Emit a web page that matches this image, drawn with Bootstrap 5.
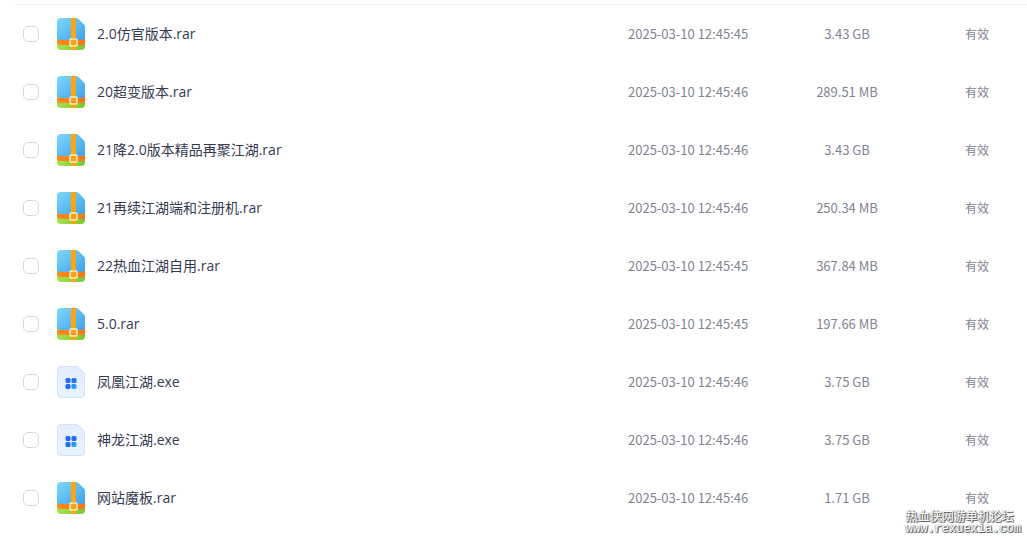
<!DOCTYPE html>
<html lang="zh-CN">
<head>
<meta charset="utf-8">
<meta name="viewport" content="width=device-width, initial-scale=1">
<title>文件列表</title>
<link href="https://cdn.jsdelivr.net/npm/bootstrap@5.3.0/dist/css/bootstrap.min.css" rel="stylesheet">
<style>
body{font-family:"Noto Sans CJK SC",sans-serif}
.file-list{margin-left:15px}
.files{table-layout:fixed;border-top:1px solid #f1f2f4}
.files td{height:58px;padding:0;vertical-align:middle;border:0;font-size:13px;line-height:20px;color:#7f8491}
.files .name-cell{font-family:"Open Sans","Noto Sans CJK SC",sans-serif;font-size:14px}
.files label{color:#333a50}
.col-tick{width:42px}
.col-date{width:154px}
.col-size{width:130px}
.col-state{width:115px}
.files .form-check-input{width:16px;height:16px;margin:0 0 0 8px;border:1px solid #d4d7de;border-radius:5px;display:block}
.files .size-cell{padding-top:1px}
.files .state-cell{font-size:12px;padding:1px 0 0 53px}
.file-icon{width:28px;height:32px;flex:none}
.forum-mark{right:6px;bottom:8px;font-size:12px;line-height:14px;color:#fff;text-shadow:1px 1px 0 #666,1px 0 1px #777,0 1px 1px #777,-1px 0 1px #ccc}
.forum-url{font-family:"Liberation Mono",monospace;line-height:12px}
</style>
</head>
<body class="bg-white">
<svg class="position-absolute" width="0" height="0" aria-hidden="true">
  <defs>
    <linearGradient id="sky" x1="0" y1="0" x2="1" y2="1"><stop stop-color="#7dd8ff"/><stop offset="1" stop-color="#3ba2ee"/></linearGradient>
    <linearGradient id="grass" x1="0" y1="0" x2="1" y2="0"><stop stop-color="#a7e34f"/><stop offset="1" stop-color="#76c92c"/></linearGradient>
    <linearGradient id="band" x1="0" y1="0" x2="1" y2="0"><stop stop-color="#ff8a1b"/><stop offset="1" stop-color="#ff7414"/></linearGradient>
    <linearGradient id="sheet" x1="0" y1="0" x2="0" y2="1"><stop stop-color="#e3ecff"/><stop offset="1" stop-color="#e6f4ff"/></linearGradient>
    <linearGradient id="aqua" x1="0" y1="0" x2="1" y2="1"><stop stop-color="#2379ff"/><stop offset="1" stop-color="#35b6ff"/></linearGradient>
  </defs>
  <symbol id="rar" viewBox="0 0 28 32">
    <path d="M0 20h28v8a4 4 0 0 1-4 4H4a4 4 0 0 1-4-4z" fill="url(#grass)"/>
    <path d="M0 18h28v6a3 3 0 0 1-3 3H3a3 3 0 0 1-3-3z" fill="url(#band)"/>
    <path d="M4 0h15q1.500 0 2.500 1l5.500 5.500q1 1 1 2.500v10a3 3 0 0 1-3 3H3a3 3 0 0 1-3-3V4a4 4 0 0 1 4-4z" fill="url(#sky)"/>
    <path d="M14 0h5v32h-5z" fill="#ffa509"/>
    <rect x="13" y="21" width="7" height="7" rx="1" fill="#ffa01b" stroke="#fff0c5" stroke-width="1.5"/>
  </symbol>
  <symbol id="exe" viewBox="0 0 28 32">
    <path d="M4 .5h15.500q1 0 2 1l5 5q1 1 1 2V28a3.500 3.500 0 0 1-3.500 3.500H4A3.500 3.500 0 0 1 .5 28V4A3.500 3.500 0 0 1 4 .5z" fill="url(#sheet)" stroke="#d0e0fd"/>
    <path d="M21.500 1.500 26.500 6.500 27 8z" fill="#c9dafd"/>
    <g fill="#216cff"><rect x="8.500" y="12" width="5" height="5" rx="1.500"/><rect x="14.500" y="12" width="5" height="5" rx="1.500"/><rect x="8.500" y="18" width="5" height="5" rx="1.500"/></g>
    <rect x="14.500" y="18" width="5" height="5" rx="1.500" fill="url(#aqua)"/>
  </symbol>
</svg>
<main class="file-list position-relative pt-1 pb-3">
  <table class="files table table-borderless w-100 mb-0">
    <colgroup><col class="col-tick"><col><col class="col-date"><col class="col-size"><col class="col-state"></colgroup>
    <tbody>
      <tr><td><input class="form-check-input" type="checkbox" id="f1"></td><td class="name-cell"><div class="d-flex align-items-center"><svg class="file-icon me-2"><use href="#rar"/></svg><label class="ms-1" for="f1">2.0仿官版本.rar</label></div></td><td>2025-03-10 12:45:45</td><td class="size-cell text-center">3.43 GB</td><td class="state-cell">有效</td></tr>
      <tr><td><input class="form-check-input" type="checkbox" id="f2"></td><td class="name-cell"><div class="d-flex align-items-center"><svg class="file-icon me-2"><use href="#rar"/></svg><label class="ms-1" for="f2">20超变版本.rar</label></div></td><td>2025-03-10 12:45:46</td><td class="size-cell text-center">289.51 MB</td><td class="state-cell">有效</td></tr>
      <tr><td><input class="form-check-input" type="checkbox" id="f3"></td><td class="name-cell"><div class="d-flex align-items-center"><svg class="file-icon me-2"><use href="#rar"/></svg><label class="ms-1" for="f3">21降2.0版本精品再聚江湖.rar</label></div></td><td>2025-03-10 12:45:46</td><td class="size-cell text-center">3.43 GB</td><td class="state-cell">有效</td></tr>
      <tr><td><input class="form-check-input" type="checkbox" id="f4"></td><td class="name-cell"><div class="d-flex align-items-center"><svg class="file-icon me-2"><use href="#rar"/></svg><label class="ms-1" for="f4">21再续江湖端和注册机.rar</label></div></td><td>2025-03-10 12:45:46</td><td class="size-cell text-center">250.34 MB</td><td class="state-cell">有效</td></tr>
      <tr><td><input class="form-check-input" type="checkbox" id="f5"></td><td class="name-cell"><div class="d-flex align-items-center"><svg class="file-icon me-2"><use href="#rar"/></svg><label class="ms-1" for="f5">22热血江湖自用.rar</label></div></td><td>2025-03-10 12:45:45</td><td class="size-cell text-center">367.84 MB</td><td class="state-cell">有效</td></tr>
      <tr><td><input class="form-check-input" type="checkbox" id="f6"></td><td class="name-cell"><div class="d-flex align-items-center"><svg class="file-icon me-2"><use href="#rar"/></svg><label class="ms-1" for="f6">5.0.rar</label></div></td><td>2025-03-10 12:45:45</td><td class="size-cell text-center">197.66 MB</td><td class="state-cell">有效</td></tr>
      <tr><td><input class="form-check-input" type="checkbox" id="f7"></td><td class="name-cell"><div class="d-flex align-items-center"><svg class="file-icon me-2"><use href="#exe"/></svg><label class="ms-1" for="f7">凤凰江湖.exe</label></div></td><td>2025-03-10 12:45:46</td><td class="size-cell text-center">3.75 GB</td><td class="state-cell">有效</td></tr>
      <tr><td><input class="form-check-input" type="checkbox" id="f8"></td><td class="name-cell"><div class="d-flex align-items-center"><svg class="file-icon me-2"><use href="#exe"/></svg><label class="ms-1" for="f8">神龙江湖.exe</label></div></td><td>2025-03-10 12:45:46</td><td class="size-cell text-center">3.75 GB</td><td class="state-cell">有效</td></tr>
      <tr><td><input class="form-check-input" type="checkbox" id="f9"></td><td class="name-cell"><div class="d-flex align-items-center"><svg class="file-icon me-2"><use href="#rar"/></svg><label class="ms-1" for="f9">网站魔板.rar</label></div></td><td>2025-03-10 12:45:46</td><td class="size-cell text-center">1.71 GB</td><td class="state-cell">有效</td></tr>
    </tbody>
  </table>
  <div class="forum-mark position-absolute"><div>热血侠网游单机论坛</div><div class="forum-url">www.rexuexia.com</div></div>
</main>
<script src="https://cdn.jsdelivr.net/npm/bootstrap@5.3.0/dist/js/bootstrap.bundle.min.js"></script>
</body>
</html>
